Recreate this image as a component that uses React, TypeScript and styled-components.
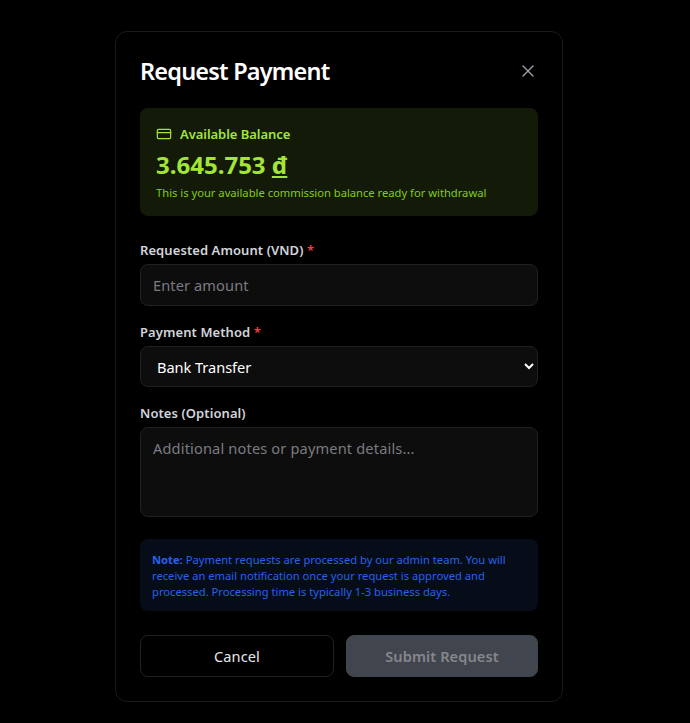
import styled, { createGlobalStyle } from "styled-components";
import { CreditCard, X } from "lucide-react";

const GlobalStyle = createGlobalStyle`
  html, body {
    margin: 0;
    height: 100%;
    background: #000;
    overflow: hidden;
  }
  * {
    box-sizing: border-box;
  }
  body {
    font-family: "Noto Sans", "Open Sans", sans-serif;
    color: #fff;
  }
`;

const Page = styled.div`
  height: 723px;
  padding: 31px 127px 0 115px;
`;

const Modal = styled.form`
  width: 448px;
  height: 671px;
  padding: 23px 24px;
  background: #000;
  border: 1px solid #1a1a1c;
  border-radius: 12px;
`;

const Header = styled.div`
  display: flex;
  align-items: center;
  justify-content: space-between;
  height: 32px;
  margin-bottom: 21px;
`;

const Title = styled.h2`
  margin: 0;
  font-size: 23.5px;
  font-weight: 600;
  letter-spacing: -0.8px;
`;

const CloseButton = styled.button`
  display: flex;
  padding: 0;
  background: none;
  border: 0;
  color: #9ca3af;
`;

const BalanceCard = styled.div`
  height: 108px;
  padding: 16px;
  margin-bottom: 24px;
  background: #131a07;
  border-radius: 8px;
  color: #a3e635;
`;

const BalanceLabel = styled.div`
  display: flex;
  align-items: center;
  gap: 8px;
  height: 20px;
  font-size: 13px;
  font-weight: 600;
  letter-spacing: -0.05px;
`;

const BalanceAmount = styled.div`
  margin-top: 5px;
  height: 32px;
  font-size: 24px;
  line-height: 32px;
  font-weight: 700;
`;

const Currency = styled.span`
  text-decoration: underline;
`;

const BalanceHint = styled.p`
  margin: 4px 0 0;
  font-size: 11.2px;
  line-height: 16px;
  color: #84cc16;
`;

const Field = styled.div`
  margin-bottom: 16px;
`;

const Label = styled.label`
  display: block;
  height: 20px;
  margin-bottom: 4px;
  font-size: 13px;
  line-height: 20px;
  font-weight: 600;
  letter-spacing: 0.08px;
  color: #d1d5db;
`;

const Required = styled.span`
  color: #ef4444;
`;

const controlStyles = `
  display: block;
  width: 100%;
  background: #0d0d0e;
  border: 1px solid #212124;
  border-radius: 8px;
  font-family: inherit;
  font-size: 14.6px;
  color: #fff;
  outline: none;

  &::placeholder {
    color: #7b7b80;
    opacity: 1;
  }
`;

const Input = styled.input`
  ${controlStyles}
  height: 42px;
  padding: 0 12px;
  letter-spacing: 0.1px;
`;

const Select = styled.select`
  ${controlStyles}
  height: 41px;
  padding: 0 12px;
  letter-spacing: -0.05px;
`;

const TextArea = styled.textarea`
  ${controlStyles}
  height: 90px;
  padding: 8px 12px;
  line-height: 24px;
  letter-spacing: 0.15px;
  resize: none;
`;

const NoteBox = styled.div`
  height: 72px;
  margin: 22px 0 24px;
  padding: 13px 12px 11px;
  background: #060c18;
  border-radius: 8px;
  font-size: 11.2px;
  line-height: 16px;
  color: #2563eb;
`;

const Actions = styled.div`
  display: grid;
  grid-template-columns: 194px 192px;
  gap: 12px;
`;

const Button = styled.button<{ $primary?: boolean }>`
  height: 42px;
  border-radius: 8px;
  font-family: inherit;
  font-size: 14.6px;
  letter-spacing: 0.08px;
  font-weight: ${(p) => (p.$primary ? 600 : 400)};
  background: ${(p) => (p.$primary ? "#41454d" : "#000")};
  border: 1px solid ${(p) => (p.$primary ? "#41454d" : "#212124")};
  color: ${(p) => (p.$primary ? "#85878c" : "#e5e7eb")};
`;

export default function App() {
  return (
    <>
      <GlobalStyle />
      <Page>
        <Modal>
          <Header>
            <Title>Request Payment</Title>
            <CloseButton type="button" aria-label="Close">
              <X size={20} strokeWidth={1.6} />
            </CloseButton>
          </Header>

          <BalanceCard>
            <BalanceLabel>
              <CreditCard size={16} strokeWidth={1.8} />
              Available Balance
            </BalanceLabel>
            <BalanceAmount>
              3.645.753 <Currency>đ</Currency>
            </BalanceAmount>
            <BalanceHint>This is your available commission balance ready for withdrawal</BalanceHint>
          </BalanceCard>

          <Field>
            <Label>
              Requested Amount (VND) <Required>*</Required>
            </Label>
            <Input placeholder="Enter amount" />
          </Field>

          <Field>
            <Label>
              Payment Method <Required>*</Required>
            </Label>
            <Select defaultValue="bank">
              <option value="bank">Bank Transfer</option>
            </Select>
          </Field>

          <Field>
            <Label>Notes (Optional)</Label>
            <TextArea placeholder="Additional notes or payment details..." />
          </Field>

          <NoteBox>
            <strong>Note:</strong> Payment requests are processed by our admin team. You will
            receive an email notification once your request is approved and processed. Processing
            time is typically 1-3 business days.
          </NoteBox>

          <Actions>
            <Button type="button">Cancel</Button>
            <Button type="button" $primary disabled>
              Submit Request
            </Button>
          </Actions>
        </Modal>
      </Page>
    </>
  );
}
